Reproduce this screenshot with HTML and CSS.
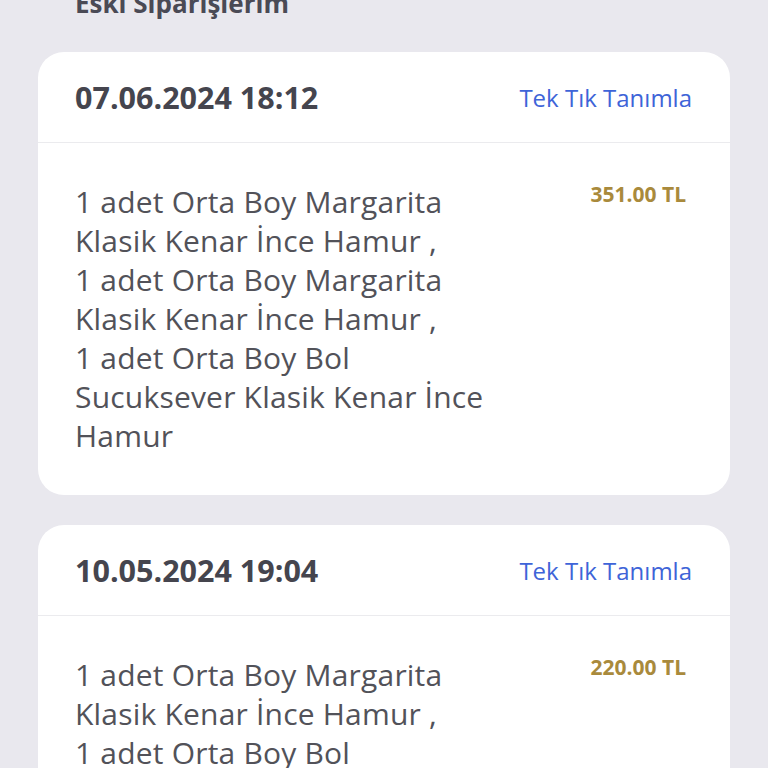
FILE: index.html
```html
<!DOCTYPE html>
<html lang="tr">
<head>
<meta charset="utf-8">
<link rel="stylesheet" href="styles.css">
</head>
<body>
<main class="page">
  <h2 class="title">Eski Siparişlerim</h2>
  <section class="card">
    <div class="card-head">
      <span class="date">07.06.2024 18:12</span>
      <a class="link">Tek Tık Tanımla</a>
    </div>
    <div class="card-body">
      <p class="items">1 adet Orta Boy Margarita Klasik Kenar İnce Hamur ,<br>1 adet Orta Boy Margarita Klasik Kenar İnce Hamur ,<br>1 adet Orta Boy Bol Sucuksever Klasik Kenar İnce Hamur</p>
      <span class="price">351.00 TL</span>
    </div>
  </section>
  <section class="card">
    <div class="card-head">
      <span class="date">10.05.2024 19:04</span>
      <a class="link">Tek Tık Tanımla</a>
    </div>
    <div class="card-body">
      <p class="items">1 adet Orta Boy Margarita Klasik Kenar İnce Hamur ,<br>1 adet Orta Boy Bol Sucuksever Klasik Kenar İnce Hamur</p>
      <span class="price">220.00 TL</span>
    </div>
  </section>
</main>
</body>
</html>
```
FILE: styles.css
```css
html, body {
  margin: 0;
  padding: 0;
  background: #e9e8ee;
  height: 768px;
  overflow: hidden;
}
.page {
  padding: 0 38px;
  font-family: "Open Sans", "Lato", sans-serif;
  display: flex;
  flex-direction: column;
  gap: 30px;
}
.title {
  margin: -16px 0 0 37px;
  font-size: 26px;
  line-height: 38px;
  font-weight: 700;
  color: #4a4a55;
}
.card {
  background: #fff;
  border-radius: 26px;
  overflow: hidden;
}
.card-head {
  height: 90px;
  display: flex;
  align-items: center;
  justify-content: space-between;
  padding: 0 38px 0 37px;
  border-bottom: 1px solid #ebebee;
}
.date {
  font-size: 30.5px;
  font-weight: 700;
  color: #45454e;
}
.link {
  font-size: 24px;
  color: #3e64d8;
}
.card-body {
  display: flex;
  justify-content: space-between;
  align-items: flex-start;
  padding: 39px 44px 40px 37px;
}
.items {
  margin: 0;
  width: 440px;
  font-size: 30px;
  line-height: 39px;
  letter-spacing: 0.2px;
  color: #525259;
}
.price {
  font-size: 21px;
  line-height: 25px;
  font-weight: 700;
  color: #a98a3c;
}
```
